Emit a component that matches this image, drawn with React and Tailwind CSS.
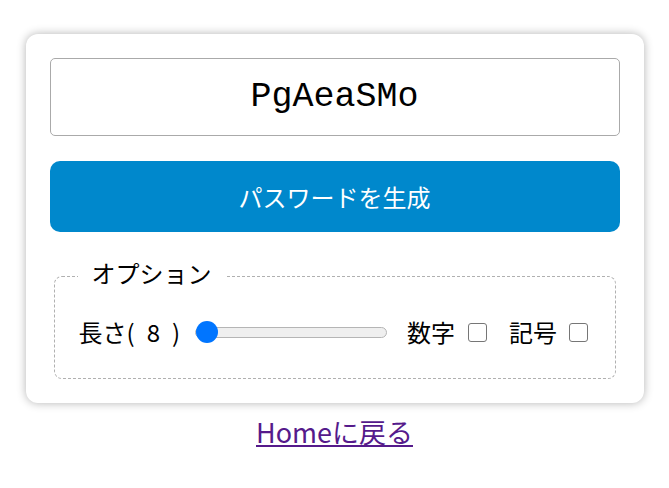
import { useState } from "react";

export default function App() {
  const [length, setLength] = useState(8);
  const [digits, setDigits] = useState(false);
  const [symbols, setSymbols] = useState(false);

  return (
    <div className="flex min-h-screen flex-col items-center bg-white pt-[34px] font-['Noto_Sans_CJK_JP',sans-serif] text-black">
      <div className="w-[618px] rounded-[12px] bg-white px-6 pb-6 pt-6 shadow-[0_0_10px_rgba(0,0,0,0.3)]">
        <div className="flex h-[78px] items-center justify-center rounded-[5px] border border-[#aaaaaa] font-['Liberation_Mono',monospace] text-[35px] leading-none">
          PgAeaSMo
        </div>

        <button
          type="button"
          className="mt-[25px] flex h-[71px] w-full items-center justify-center rounded-[10px] bg-[#0088cc] text-[24px] leading-none text-white"
        >
          パスワードを生成
        </button>

        <fieldset className="mx-1 mt-[29px] rounded-[8px] border border-dashed border-[#b0b0b0] pb-[31px] pl-6 pt-[26px]">
          <legend className="ml-[-1px] px-[14px] pb-[6px] text-[24px] leading-[24px]">オプション</legend>
          <div className="flex h-[30px] items-center text-[24px] leading-none">
            <span>長さ(</span>
            <span className="ml-[12px]">{length}</span>
            <span className="ml-[12px]">)</span>
            <input
              type="range"
              min={8}
              max={32}
              value={length}
              onChange={(e) => setLength(Number(e.target.value))}
              className="ml-[15px] h-[11px] w-[192px] cursor-pointer appearance-none rounded-full border border-[#b5b5b5] bg-[#efefef] [&::-webkit-slider-thumb]:h-[22px] [&::-webkit-slider-thumb]:w-[22px] [&::-webkit-slider-thumb]:appearance-none [&::-webkit-slider-thumb]:rounded-full [&::-webkit-slider-thumb]:bg-[#0075ff]"
            />
            <span className="ml-[20px]">数字</span>
            <input
              type="checkbox"
              checked={digits}
              onChange={(e) => setDigits(e.target.checked)}
              className="ml-[13px] h-[19px] w-[19px] appearance-none rounded-[3px] border-[1.5px] border-[#767676] bg-white"
            />
            <span className="ml-[22px]">記号</span>
            <input
              type="checkbox"
              checked={symbols}
              onChange={(e) => setSymbols(e.target.checked)}
              className="ml-[12px] h-[19px] w-[19px] appearance-none rounded-[3px] border-[1.5px] border-[#767676] bg-white"
            />
          </div>
        </fieldset>
      </div>

      <a href="#" className="mt-[13px] text-[27px] leading-[32px] text-[#551a8b] underline">
        Homeに戻る
      </a>
    </div>
  );
}
